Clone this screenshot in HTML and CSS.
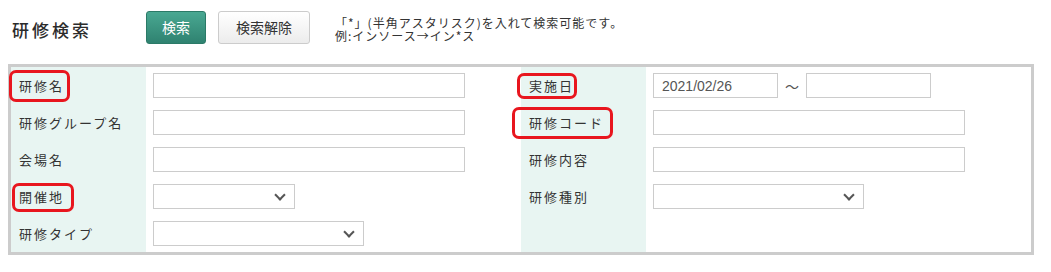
FILE: index.html
```html
<!DOCTYPE html>
<html lang="ja">
<head>
    <meta charset="UTF-8">
    <meta name="viewport" content="width=device-width, initial-scale=1.0">
    <title>研修検索</title>
    <link rel="stylesheet" href="styles.css">
</head>
<body>
    <div class="search-head">
        <h2>研修検索</h2>
        <button type="button" class="btn btn-green">検索</button>
        <button type="button" class="btn btn-plain">検索解除</button>
        <p class="note">「*」(半角アスタリスク)を入れて検索可能です。<br>例:インソース→イン*ス</p>
    </div>

    <div class="search-panel">
        <table class="search-table">
            <tr>
                <th><span class="mark mark-name">研修名</span></th>
                <td><input type="text" class="field-wide"></td>
                <th><span class="mark mark-date">実施日</span></th>
                <td>
                    <div class="date-range">
                        <input type="text" class="field-date" value="2021/02/26">
                        <span class="tilde">～</span>
                        <input type="text" class="field-date">
                    </div>
                </td>
            </tr>
            <tr>
                <th>研修グループ名</th>
                <td><input type="text" class="field-wide"></td>
                <th><span class="mark mark-code">研修コード</span></th>
                <td><input type="text" class="field-wide"></td>
            </tr>
            <tr>
                <th>会場名</th>
                <td><input type="text" class="field-wide"></td>
                <th>研修内容</th>
                <td><input type="text" class="field-wide"></td>
            </tr>
            <tr>
                <th><span class="mark mark-place">開催地</span></th>
                <td><div class="select select-short"></div></td>
                <th>研修種別</th>
                <td><div class="select select-mid"></div></td>
            </tr>
            <tr>
                <th>研修タイプ</th>
                <td><div class="select select-mid"></div></td>
                <th></th>
                <td></td>
            </tr>
        </table>
    </div>
</body>
</html>
```

FILE: styles.css
```css
body {
    font-family: "Noto Sans CJK JP", "Liberation Sans", sans-serif;
    color: #333;
    margin: 0;
    padding: 0 8px;
    background-color: #ffffff;
}
.search-head {
    display: flex;
    align-items: center;
    padding-top: 11px;
    height: 33px;
    margin-bottom: 20px;
}
h2 {
    margin: 0 0 0 4px;
    width: 134px;
    font-size: 17px;
    font-weight: 500;
    letter-spacing: 3px;
    color: #2b2b2b;
    line-height: 20px;
    padding-top: 4px;
}
.btn {
    font-family: "Noto Sans CJK JP", sans-serif;
    font-size: 14px;
    height: 33px;
    border-radius: 3px;
    padding: 0;
    line-height: 31px;
    cursor: pointer;
}
.btn-green {
    width: 60px;
    color: #ffffff;
    background: linear-gradient(#49a892, #2f8270);
    border: 1px solid #2b7a67;
}
.btn-plain {
    width: 92px;
    margin-left: 12px;
    color: #333;
    background: linear-gradient(#ffffff, #ececec);
    border: 1px solid #cccccc;
}
.note {
    margin: 0 0 0 25px;
    font-size: 12px;
    line-height: 13px;
    letter-spacing: 1px;
    color: #333;
    padding-top: 2px;
}
.search-panel {
    width: 1026px;
    border: 3px solid #cccccc;
    box-sizing: border-box;
}
.search-table {
    width: 100%;
    border-collapse: collapse;
}
.search-table th,
.search-table td {
    padding: 6px 0;
    height: 25px;
    text-align: left;
    vertical-align: middle;
}
.search-table th {
    background-color: #e8f5f2;
    font-size: 13px;
    font-weight: normal;
    letter-spacing: 2px;
    line-height: 16px;
    padding-left: 8px;
    color: #333;
    white-space: nowrap;
}
.search-table th:first-child {
    width: 127px;
}
.search-table th:nth-child(3) {
    width: 117px;
}
.search-table td {
    padding-left: 7px;
}
.search-table td:nth-child(2) {
    width: 368px;
}
input[type="text"] {
    display: block;
    height: 25px;
    border: 1px solid #cccccc;
    box-sizing: border-box;
    padding: 0 8px;
    font-family: "Liberation Sans", sans-serif;
    font-size: 14px;
    color: #555;
    margin: 0;
}
.field-wide {
    width: 312px;
}
.date-range {
    display: flex;
    align-items: center;
}
.field-date {
    width: 125px;
}
.tilde {
    width: 28px;
    text-align: center;
    font-size: 14px;
    color: #555;
}
.select {
    height: 25px;
    border: 1px solid #cccccc;
    box-sizing: border-box;
    position: relative;
    background-color: #ffffff;
}
.select::after {
    content: "";
    position: absolute;
    right: 10px;
    top: 6px;
    width: 6px;
    height: 6px;
    border-right: 2px solid #555;
    border-bottom: 2px solid #555;
    transform: rotate(45deg);
}
.select-short {
    width: 142px;
}
.select-mid {
    width: 211px;
}
/* 赤い囲み */
.mark {
    position: relative;
    display: inline-block;
}
.mark::after {
    content: "";
    position: absolute;
    border: 3px solid #e8161e;
    border-radius: 7px;
}
.mark-name::after {
    left: -10px;
    right: -6px;
    top: -8px;
    bottom: -8px;
}
.mark-place::after {
    left: -7px;
    right: -10px;
    top: -6px;
    bottom: -7px;
}
.mark-date::after {
    left: -12px;
    right: -3px;
    top: -5px;
    bottom: -5px;
}
.mark-code::after {
    left: -17px;
    right: -9px;
    top: -8px;
    bottom: -8px;
}
```
